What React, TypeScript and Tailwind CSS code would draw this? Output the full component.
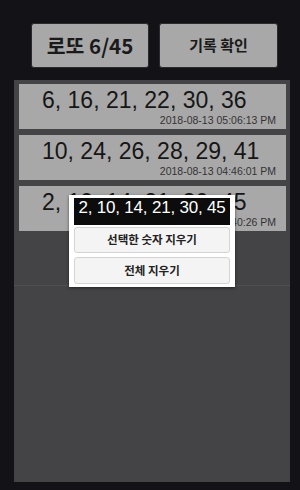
import React from "react";

const kr = { fontFamily: '"Noto Sans CJK KR", "Noto Sans", sans-serif' };
const ar = { fontFamily: '"Liberation Sans", Arial, sans-serif' };

const rows = [
  { nums: "6, 16, 21, 22, 30, 36", date: "2018-08-13 05:06:13 PM" },
  { nums: "10, 24, 26, 28, 29, 41", date: "2018-08-13 04:46:01 PM" },
  { nums: "2, 10, 14, 21, 30, 45", date: "2018-08-13 04:40:26 PM" },
];

export default function App() {
  return (
    <div className="relative w-[300px] h-[490px] bg-[#131317] overflow-hidden">
      <div className="flex gap-[10px] pl-[31px] pt-[23px]">
        <div
          className="w-[118px] h-[45px] flex items-center justify-center bg-[#a8a8a8] border border-[#2a2a2e] rounded-[3px] text-[#1a1a1a] text-[20.5px] font-bold"
          style={kr}
        >
          로또 6/45
        </div>
        <div
          className="w-[119px] h-[45px] flex items-center justify-center bg-[#a8a8a8] border border-[#2a2a2e] rounded-[3px] text-[#1a1a1a] text-[15px] font-bold"
          style={kr}
        >
          기록 확인
        </div>
      </div>

      <div className="ml-[14px] mt-[12px] w-[276px] h-[402px] bg-[#444446] flex flex-col">
        <div className="flex flex-col gap-[6px] pl-[5px] pr-[4px] pt-[4px]">
          {rows.map((r, i) => (
            <div key={i} className="h-[45px] bg-[#a8a8a8] flex flex-col pt-[5px]" style={ar}>
              <div className="pl-[23px] text-[23px] leading-[23px] text-[#161616] whitespace-nowrap">{r.nums}</div>
              <div className="mt-[2px] pr-[10px] text-right text-[10.5px] leading-[12px] text-[#333333] whitespace-nowrap">
                {r.date}
              </div>
            </div>
          ))}
        </div>
        <div className="mt-[54px] h-px bg-[#505053]" />
      </div>

      <div className="absolute left-[69px] top-[195px] w-[166px] h-[92px] bg-white shadow-[0_1px_3px_rgba(0,0,0,0.5)] flex flex-col px-[5px] pt-[3px]">
        <div className="h-[27px] bg-[#0c0c0c] flex justify-center text-white text-[17px] leading-[18px] pt-[1px] tracking-[-0.2px] whitespace-nowrap" style={ar}>
          2, 10, 14, 21, 30, 45
        </div>
        <div
          className="mt-[2px] h-[26px] flex items-center justify-center bg-[#f4f4f4] border border-[#d4d4d4] rounded-[3px] text-[#222] text-[11.5px] font-semibold"
          style={kr}
        >
          선택한 숫자 지우기
        </div>
        <div
          className="mt-[4px] h-[27px] flex items-center justify-center bg-[#f4f4f4] border border-[#d4d4d4] rounded-[3px] text-[#222] text-[11.5px] font-semibold"
          style={kr}
        >
          전체 지우기
        </div>
      </div>
    </div>
  );
}
